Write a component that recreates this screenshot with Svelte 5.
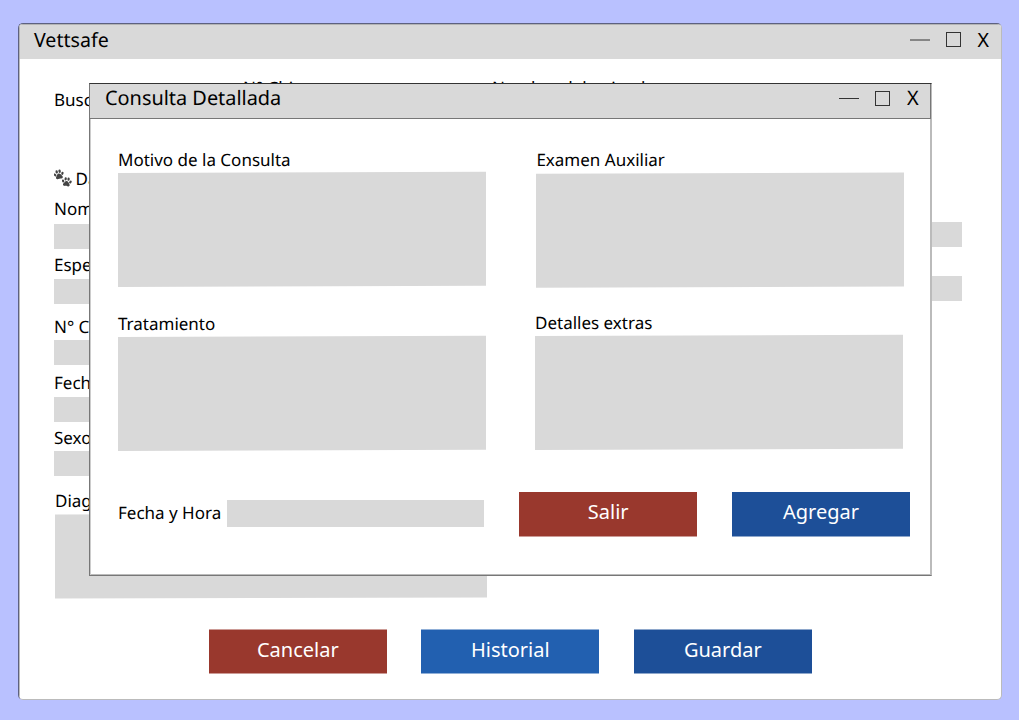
<script>
  const fields = [
    { label: 'Nombre', before: 6, after: 4 },
    { label: 'Especie', before: 4, after: 3 },
    { label: 'N° Chip', before: 11, after: 2 },
    { label: 'Fecha', before: 6, after: 3 },
    { label: 'Sexo', before: 4, after: 2 }
  ];
</script>

{#snippet controls()}
  <span class="controls">
    <svg class="minus" width="20" height="2" viewBox="0 0 20 2"><path d="M0 1H20" /></svg>
    <svg class="max" width="15" height="15" viewBox="0 0 15 15"><rect x=".5" y=".5" width="14" height="14" /></svg>
    <span class="close">X</span>
  </span>
{/snippet}

{#snippet paw()}
  <ellipse cx="-3.8" cy="-.5" rx="1.15" ry="1.6" transform="rotate(-25 -3.8 -.5)" />
  <ellipse cx="-1.5" cy="-3.1" rx="1.2" ry="1.7" />
  <ellipse cx="1.5" cy="-3.1" rx="1.2" ry="1.7" />
  <ellipse cx="3.8" cy="-.5" rx="1.15" ry="1.6" transform="rotate(25 3.8 -.5)" />
  <path d="M0-1.1C1.6-1.1 2.2.7 3.1 1.8 4.2 3.3 2.9 4.7 1.4 4.2 .5 3.9-.5 3.9-1.4 4.2-2.9 4.7-4.2 3.3-3.1 1.8-2.2.7-1.6-1.1 0-1.1Z" />
{/snippet}

<main class="desktop">
  <section class="window">
    <header class="bar main-bar"><span class="title">Vettsafe</span>{@render controls()}</header>
    <div class="page">
      <div class="search">
        <span class="buscar">Buscar</span>
        <span class="chip">N° Chip</span>
        <span class="animal">Nombre del animal</span>
      </div>
      <div class="columns">
        <div class="left">
          <h2>
            <svg class="paws" width="18" height="19" viewBox="0 0 18 19">
              <g transform="translate(4.8 5.6) rotate(-12)">{@render paw()}</g>
              <g transform="translate(12.7 13) rotate(8) scale(.97)">{@render paw()}</g>
            </svg>
            <span>Datos</span>
          </h2>
          {#each fields as f}
            <div class="field" style="margin-top:{f.before}px;gap:{f.after}px">
              <span class="label">{f.label}</span>
              <div class="input"></div>
            </div>
          {/each}
          <div class="diagnosis">
            <span class="label">Diagnóstico</span>
            <div class="area"></div>
          </div>
        </div>
        <div class="right">
          <div class="input"></div>
          <div class="input"></div>
        </div>
      </div>
      <div class="actions">
        <button class="red">Cancelar</button>
        <button class="blue">Historial</button>
        <button class="navy">Guardar</button>
      </div>
    </div>
  </section>

  <section class="modal">
    <header class="bar modal-bar"><span class="title">Consulta Detallada</span>{@render controls()}</header>
    <div class="grid">
      <div class="cell motivo"><span>Motivo de la Consulta</span><div class="area"></div></div>
      <div class="cell examen"><span>Examen Auxiliar</span><div class="area"></div></div>
      <div class="cell tratamiento"><span>Tratamiento</span><div class="area"></div></div>
      <div class="cell detalles"><span>Detalles extras</span><div class="area"></div></div>
    </div>
    <footer>
      <span class="date-label">Fecha y Hora</span>
      <div class="date"></div>
      <button class="red">Salir</button>
      <button class="navy">Agregar</button>
    </footer>
  </section>
</main>

<style>
  :global(body) { margin: 0; }
  * { box-sizing: border-box; }
  .desktop {
    position: relative;
    width: 1019px;
    height: 720px;
    padding: 23px 17px 20px 18px;
    overflow: hidden;
    background: #b9c1ff;
    color: #000;
    font: 17px/23px "Noto Sans", sans-serif;
    text-rendering: geometricPrecision;
    white-space: nowrap;
  }
  .window {
    height: 677px;
    overflow: hidden;
    background: #fff;
    border: 1px solid #bbb;
    border-top-color: #5d6180;
    border-left-color: #5d6180;
    border-radius: 5px;
  }
  .bar {
    display: flex;
    align-items: flex-start;
    justify-content: space-between;
    background: #d9d9d9;
    font-size: 19.9px;
    line-height: 27px;
  }
  .main-bar { height: 35px; padding: 2px 11.5px 0 15px; box-shadow: inset 1px 1px #b4b4b4; font-size: 19.6px; }
  .controls { display: flex; align-items: flex-start; }
  .controls svg { fill: none; stroke: #333; stroke-width: 1; }
  .minus { margin: 13px 16px 0 0; }
  .modal-bar .minus { margin-top: 14px; }
  .modal-bar .minus path { transform: translateY(-.5px); }
  .modal-bar .max { margin-top: 7px; }
  .max { margin: 6px 17px 0 0; }
  .close { width: 12px; }
  .page { height: 640px; padding: 0 39px 0 35px; box-shadow: inset 1px 0 #bbb; }
  .search { display: flex; height: 109px; }
  .buscar { width: 189px; padding-top: 29px; }
  .chip { width: 249px; padding-top: 17px; }
  .animal { padding-top: 17px; }
  .columns { display: flex; justify-content: space-between; height: 430px; }
  .left { width: 433px; }
  h2 { display: flex; gap: 3.5px; margin: -1px 0 0; height: 24px; font: inherit; }
  .paws { margin-top: 2px; fill: #444; flex: none; }
  .field { display: flex; flex-direction: column; }
  .label { display: block; }
  .input { width: 433px; height: 25px; background: #d9d9d9; }
  .diagnosis { margin: 13px 0 0 1px; }
  .area { width: 368px; height: 114px; background: #d9d9d9; transform: translateY(-.6px) skewY(-.2deg); }
  .diagnosis .area { width: 432px; height: 84px; margin-top: 2px; transform: skewY(-.15deg); }
  .right { padding-top: 54px; }
  .right .input + .input { margin-top: 29px; }
  .actions { display: flex; gap: 34.5px; padding: 31px 0 0 154.8px; }
  button {
    width: 178px;
    height: 45px;
    padding: 0 0 4px;
    border: 0 solid;
    border-width: 1px 0;
    background-clip: padding-box;
    color: #fff;
    font: 20px/27px "Noto Sans", sans-serif;
    flex: none;
  }
  .red { background-color: #99382d; border-color: #99382d80; }
  .blue { background-color: #2260b0; border-color: #2260b080; }
  .navy { background-color: #1d4f98; border-color: #1d4f9880; }
  .modal {
    position: absolute;
    left: 89px;
    top: 83px;
    width: 843px;
    height: 493px;
    background: #fff;
    border: 1px solid #777;
    border-top-color: #333;
    border-right-color: #bbb;
    box-shadow: inset 1px 0 #ccc, inset -1px -1px #bbb;
  }
  .modal-bar { height: 35px; padding: 0 11px 0 15px; border-bottom: 1px solid #777; border-right: 1px solid #777; }
  .grid { display: grid; grid-template-columns: 417px 1fr; grid-template-rows: 163px 179px; padding: 29px 0 0 28px; }
  .cell .area { margin-top: 2px; }
  .examen { padding-left: 1.4px; }
  .examen .area { transform: translateY(.1px) skewY(-.2deg); }
  .tratamiento { padding-top: 1px; }
  footer { display: flex; align-items: flex-start; padding-left: 28px; margin-top: 2px; }
  .date-label { width: 109.4px; padding-top: 9px; flex: none; }
  .date { width: 257px; height: 27px; margin: 8.4px 34.6px 0 0; background: #d9d9d9; flex: none; }
  footer button { margin-right: 34.6px; width: 178.4px; border-top-width: 0; padding-bottom: 5px; }
  footer button:last-child { width: 178px; margin-right: 0; }
</style>
